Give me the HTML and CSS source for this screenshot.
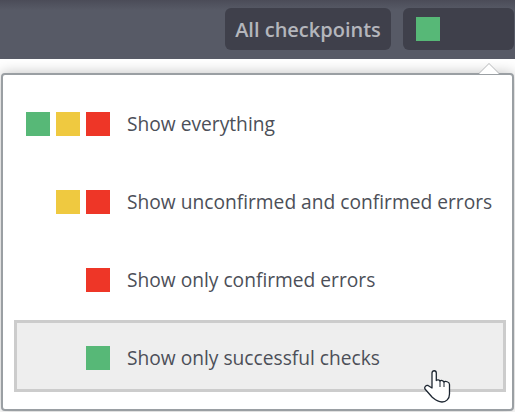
FILE: index.html
```html
<!DOCTYPE html>
<html lang="en">
<head>
    <meta charset="UTF-8">
    <meta name="viewport" content="width=device-width, initial-scale=1.0">
    <title>Checkpoints filter</title>
    <link rel="stylesheet" href="styles.css">
</head>
<body>
    <div class="toolbar">
        <div class="tool-button tool-label">All checkpoints</div>
        <div class="tool-button tool-status">
            <span class="square green"></span>
        </div>
    </div>
    <div class="popup">
        <div class="popup-arrow"></div>
        <div class="option">
            <div class="squares">
                <span class="square green"></span>
                <span class="square yellow"></span>
                <span class="square red"></span>
            </div>
            <span class="option-text">Show everything</span>
        </div>
        <div class="option">
            <div class="squares">
                <span class="square yellow"></span>
                <span class="square red"></span>
            </div>
            <span class="option-text">Show unconfirmed and confirmed errors</span>
        </div>
        <div class="option">
            <div class="squares">
                <span class="square red"></span>
            </div>
            <span class="option-text">Show only confirmed errors</span>
        </div>
        <div class="option option-hover">
            <div class="squares">
                <span class="square green"></span>
            </div>
            <span class="option-text">Show only successful checks</span>
        </div>
    </div>
    <svg class="cursor" width="27" height="34" viewBox="0 0 27 34">
        <path d="M8 3C8 0 12.300 0 12.300 3V10.500C13 9.500 15.500 9.500 16 11C17 10 19.500 10.500 20 12C21 11 25.500 11.500 25.500 14.500V24C25.500 29 22 32 18 32C13 32 10.500 29 8 27L1 19C0 17 2 15 4 15.500L8 18Z" fill="#fff" stroke="#1c2530" stroke-width="1.300" stroke-linejoin="round"/>
        <path d="M16 11V17M20 12V17" fill="none" stroke="#1c2530" stroke-width="1"/>
    </svg>
</body>
</html>
```

FILE: styles.css
```css
/* General styling */
body {
    margin: 0;
    width: 515px;
    height: 412px;
    overflow: hidden;
    position: relative;
    font-family: "Open Sans", sans-serif;
    background-color: #fff;
}
.toolbar {
    height: 59px;
    box-sizing: border-box;
    padding: 8px 1px 0 0;
    display: flex;
    justify-content: flex-end;
    gap: 12px;
    background: linear-gradient(#4b4c58, #575a66 10px);
}
.tool-button {
    height: 42px;
    box-sizing: border-box;
    display: flex;
    align-items: center;
    border-radius: 6px;
    background-color: #3f404b;
}
.tool-label {
    width: 166px;
    justify-content: center;
    color: #b4b6bc;
    font-size: 20px;
    font-weight: 600;
}
.tool-status {
    width: 111px;
    padding-left: 13px;
}
.square {
    display: block;
    width: 24px;
    height: 24px;
}
.green {
    background-color: #57b877;
}
.yellow {
    background-color: #efc940;
}
.red {
    background-color: #ee3627;
}

/* Dropdown */
.popup {
    position: absolute;
    left: 1px;
    top: 73px;
    width: 513px;
    height: 338px;
    box-sizing: border-box;
    padding: 13px 6px 0 11px;
    display: flex;
    flex-direction: column;
    gap: 6px;
    background-color: #fff;
    border: 2px solid #9a9fa3;
    border-radius: 4px;
    box-shadow: 0 0 14px rgba(0, 0, 0, 0.25);
}
.popup-arrow {
    position: absolute;
    right: 13px;
    top: -11px;
    width: 0;
    height: 0;
    border-left: 10px solid transparent;
    border-right: 10px solid transparent;
    border-bottom: 10px solid #fff;
    filter: drop-shadow(0 -1px 0 #b5b7b9);
}
.option {
    height: 72px;
    box-sizing: border-box;
    padding: 0 3px;
    display: flex;
    align-items: center;
    border: 3px solid transparent;
    color: #4c4f58;
    font-size: 19.2px;
}
.option-text {
    margin-bottom: 2px;
}
.option-hover {
    background-color: #eee;
    border-color: #ccc;
    margin-top: -2px;
    padding-top: 4px;
}
.squares {
    width: 90px;
    display: flex;
    justify-content: flex-end;
    gap: 6px;
    margin-right: 17px;
    flex-shrink: 0;
}
.cursor {
    position: absolute;
    left: 424px;
    top: 370px;
}
```
